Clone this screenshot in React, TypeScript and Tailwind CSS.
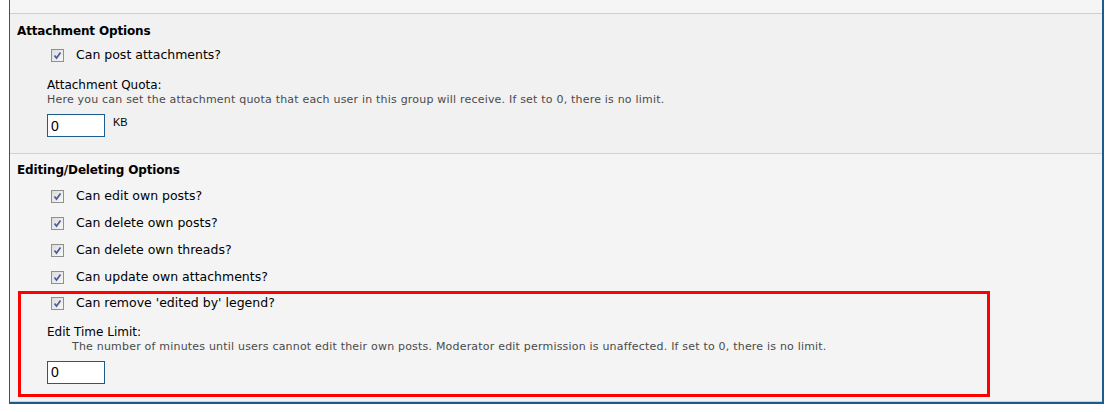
import React from 'react';

const Check: React.FC<{ label: string }> = ({ label }) => (
    <div className="flex items-center h-[27px] pl-[34px]">
        <span className="w-[13px] h-[13px] border border-[#8e8f8f] bg-gradient-to-br from-[#dcdcdc] to-[#f8f8f8] flex items-center justify-center">
            <svg width="9" height="9" viewBox="0 0 9 9" aria-hidden="true">
                <path d="M1.5 4.5 L3.5 7 L7.5 1.5" fill="none" stroke="#4a5c96" strokeWidth="1.7" />
            </svg>
        </span>
        <span className="ml-[12px] text-[12.5px] text-black">{label}</span>
    </div>
);

const NumberBox: React.FC<{ value: string }> = ({ value }) => (
    <input
        readOnly
        value={value}
        className="w-[58px] h-[23px] border border-[#1c5d8d] bg-white px-[3px] text-[14px] text-black outline-none"
        style={{ fontFamily: '"Liberation Sans", Arial, sans-serif' }}
    />
);

export default function App() {
    return (
        <div className="w-[1113px] h-[412px] bg-white" style={{ fontFamily: '"DejaVu Sans", Verdana, sans-serif' }}>
            <div className="ml-[9px] w-[1095px] border-l border-r-2 border-b-2 border-[#1d5d8e] bg-[#f1f1f1]">
                <div className="h-[14px] bg-[#f5f5f5] border-b border-[#cfcfcf]" />

                {/* Attachment Options */}
                <section className="pl-[7px] pb-[16px] border-b border-[#d2d2d2] bg-[#f1f1f1]">
                    <h3 className="h-[31px] flex items-center pt-[2px] text-[12px] tracking-[-0.15px] font-bold text-black">Attachment Options</h3>
                    <div className="-mt-[3px]">
                        <Check label="Can post attachments?" />
                    </div>
                    <div className="pl-[30px] mt-[8px]">
                        <div className="text-[12px] leading-[16px] text-black">Attachment Quota:</div>
                        <div className="text-[11px] tracking-[0.2px] leading-[14px] text-[#4a4a4a]">Here you can set the attachment quota that each user in this group will receive. If set to 0, there is no limit.</div>
                        <div className="flex items-start gap-[8px] mt-[7px]">
                            <NumberBox value="0" />
                            <span className="text-[11px] leading-[14px] mt-[1px] text-black" style={{ fontFamily: '"Liberation Sans", Arial, sans-serif' }}>KB</span>
                        </div>
                    </div>
                </section>

                {/* Editing/Deleting Options */}
                <section className="pl-[7px] pb-[4px] bg-[#f4f4f4] border-b border-[#cfcfcf]">
                    <h3 className="h-[29px] flex items-center pt-[2px] text-[12px] tracking-[-0.15px] font-bold text-black">Editing/Deleting Options</h3>
                    <Check label="Can edit own posts?" />
                    <Check label="Can delete own posts?" />
                    <Check label="Can delete own threads?" />
                    <Check label="Can update own attachments?" />
                    <div className="ml-[1px] w-[972px] border-[3px] border-[#ff0000] pb-[10px]">
                        <div className="-mt-[4px] -ml-[4px]">
                            <Check label="Can remove 'edited by' legend?" />
                        </div>
                        <div className="pl-[26px] mt-[7px]">
                            <div className="text-[12px] leading-[16px] text-black">Edit Time Limit:</div>
                            <div className="pl-[25px] text-[11px] tracking-[0.2px] leading-[14px] text-[#4a4a4a]">The number of minutes until users cannot edit their own posts. Moderator edit permission is unaffected. If set to 0, there is no limit.</div>
                            <div className="mt-[6px]">
                                <NumberBox value="0" />
                            </div>
                        </div>
                    </div>
                </section>
            </div>
        </div>
    );
}
